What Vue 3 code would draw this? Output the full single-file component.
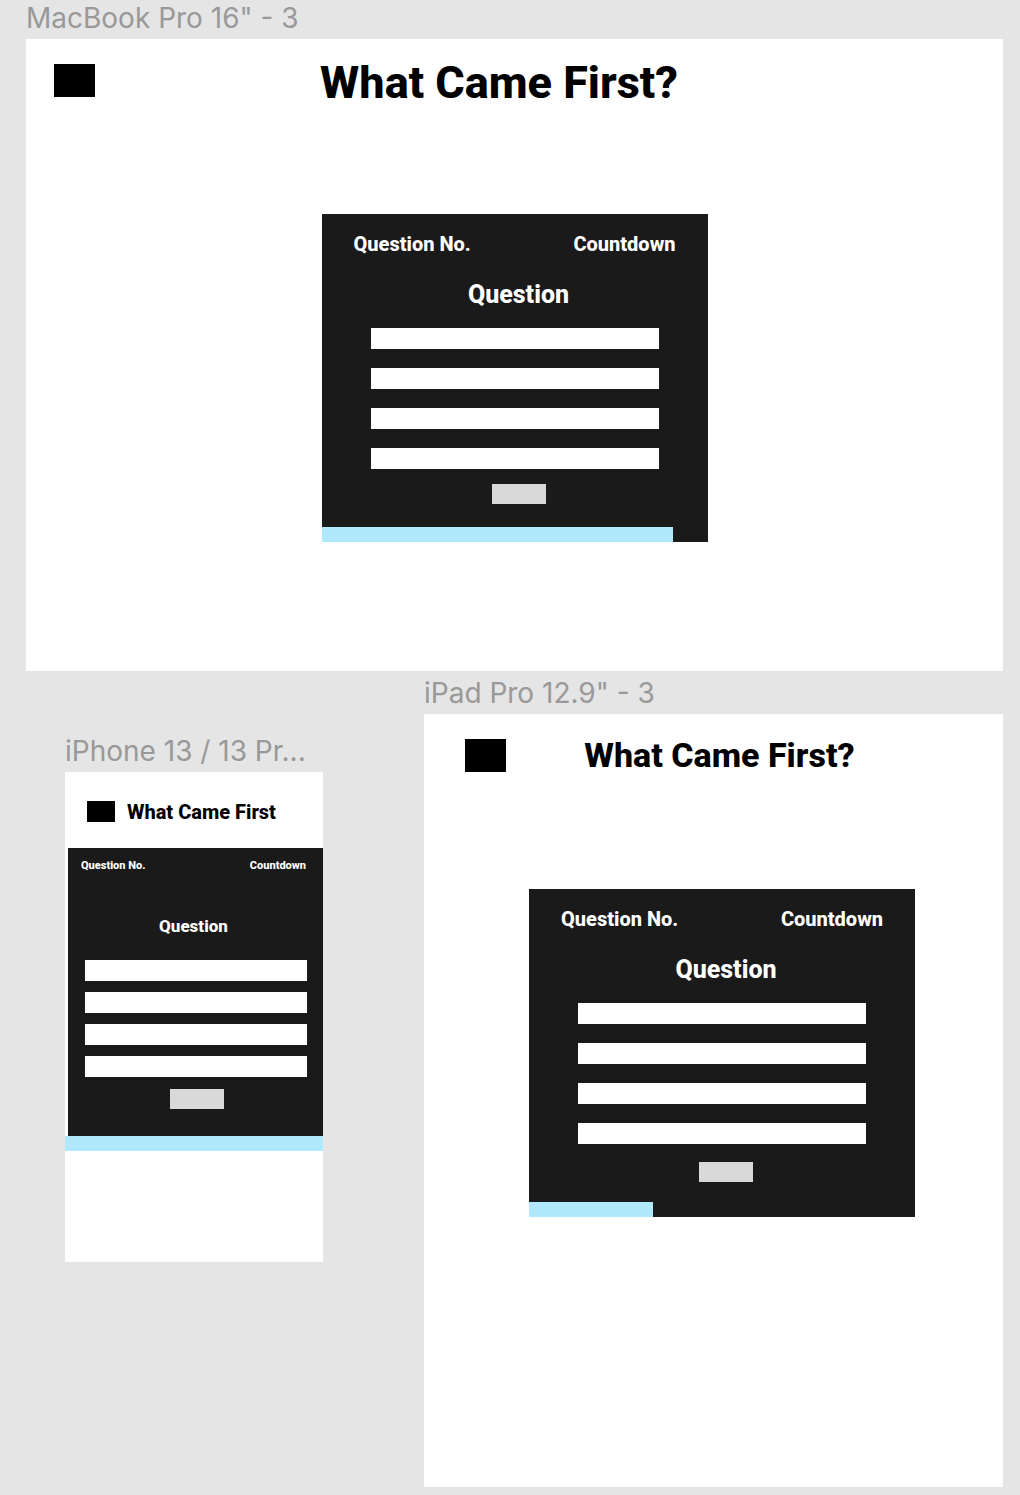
<script setup>
const desktop = { id: 'desktop', label: 'MacBook Pro 16" - 3', title: 'What Came First?', progress: 91 }
const small = [
  { id: 'phone', label: 'iPhone 13 / 13 Pr...', title: 'What Came First', progress: 100 },
  { id: 'tablet', label: 'iPad Pro 12.9" - 3', title: 'What Came First?', progress: 32 }
]
const rows = [
  { id: 'top', screens: [desktop] },
  { id: 'bottom', screens: small }
]
</script>

<template>
  <main class="canvas">
    <div v-for="row in rows" :key="row.id" class="row" :class="row.id">
      <section v-for="screen in row.screens" :key="screen.id" class="frame" :class="screen.id">
        <h2 class="label">{{ screen.label }}</h2>
        <div class="screen">
          <header class="header">
            <div class="logo"></div>
            <h1 class="title">{{ screen.title }}</h1>
          </header>
          <div class="card">
            <div class="body">
              <div class="status">
                <span>Question No.</span>
                <span>Countdown</span>
              </div>
              <h3 class="question">Question</h3>
              <div class="answers">
                <button v-for="n in 4" :key="n" type="button" class="answer" :aria-label="`Answer ${n}`"></button>
              </div>
              <div class="actions">
                <button type="button" class="next" aria-label="Next"></button>
              </div>
            </div>
            <div class="track" role="progressbar" aria-label="Progress" :aria-valuenow="screen.progress">
              <div class="bar" :style="{ width: screen.progress + '%' }"></div>
            </div>
          </div>
        </div>
      </section>
    </div>
  </main>
</template>

<style>
body {
  margin: 0;
  background: #e5e5e5;
}
</style>

<style scoped>
.canvas {
  padding: 0 17px 8px 26px;
  font-family: Roboto, sans-serif;
}

.bottom {
  display: grid;
  grid-template-columns: 258fr 579fr;
  align-items: start;
  column-gap: 101px;
  margin-top: 4px;
  padding-left: 39px;
}

h1,
h2,
h3 {
  margin: 0;
}

.label {
  padding-bottom: 3px;
  color: #999;
  font: 400 28px/36px Inter, sans-serif;
  white-space: nowrap;
}

.screen {
  box-sizing: border-box;
  background: #fff;
}

.header {
  box-sizing: border-box;
  display: flex;
  align-items: flex-start;
  min-height: 175px;
  padding: 25px 100px 0 28px;
}

.logo {
  flex: none;
  width: 41px;
  height: 33px;
  background: #000;
}

.title {
  flex: 1;
  color: #000;
  font-size: 45px;
  font-weight: 800;
  line-height: 38px;
  text-align: center;
  white-space: nowrap;
}

.card {
  display: flex;
  flex-direction: column;
  width: 386px;
  min-height: 328px;
  margin: 0 auto;
  background: #1a1a1a;
}

.body {
  flex: 1;
  background: #1a1a1a;
  color: #fff;
  font-weight: 800;
}

.status {
  display: flex;
  justify-content: space-between;
  padding: 18px 32px 0;
  font-size: 20px;
  line-height: 24px;
}

.question {
  margin: 24px 0 18px;
  padding-left: 8px;
  font-size: 25px;
  font-weight: 800;
  line-height: 30px;
  text-align: center;
}

.answers {
  display: grid;
  row-gap: 19px;
  padding: 0 49px;
}

button {
  display: block;
  padding: 0;
  border: 0;
  border-radius: 0;
}

.answer {
  height: 21px;
  background: #fff;
}

.actions {
  display: flex;
  justify-content: center;
  padding: 15px 0 0 8px;
}

.next {
  width: 54px;
  height: 20px;
  background: #d9d9d9;
}

.bar {
  height: 15px;
  background: #b0e9fd;
}

.desktop .screen {
  min-height: 632px;
}

.tablet .screen {
  min-height: 773px;
}

.tablet .header {
  padding: 25px 70px 0 41px;
}

.tablet .title {
  font-size: 34px;
  line-height: 32px;
}

.tablet .card {
  margin: 0 88px 0 auto;
}

.tablet .actions {
  padding-top: 18px;
}

.phone {
  margin-top: 58px;
}

.phone .screen {
  min-height: 490px;
}

.phone .header {
  column-gap: 12px;
  min-height: 76px;
  padding: 29px 22px 0;
}

.phone .logo {
  width: 28px;
  height: 21px;
}

.phone .title {
  font-size: 20px;
  line-height: 23px;
  text-align: left;
}

.phone .card {
  width: auto;
  min-height: 303px;
  background: none;
}

.phone .body {
  margin-left: 3px;
}

.phone .status {
  padding: 11px 17px 0 13px;
  font-size: 11px;
  line-height: 14px;
}

.phone .question {
  margin: 43px 0 24px;
  padding: 0 4px 0 0;
  font-size: 17px;
  line-height: 20px;
}

.phone .answers {
  row-gap: 11px;
  padding: 0 16px 0 17px;
}

.phone .actions {
  padding: 12px 0 0 3px;
}
</style>
